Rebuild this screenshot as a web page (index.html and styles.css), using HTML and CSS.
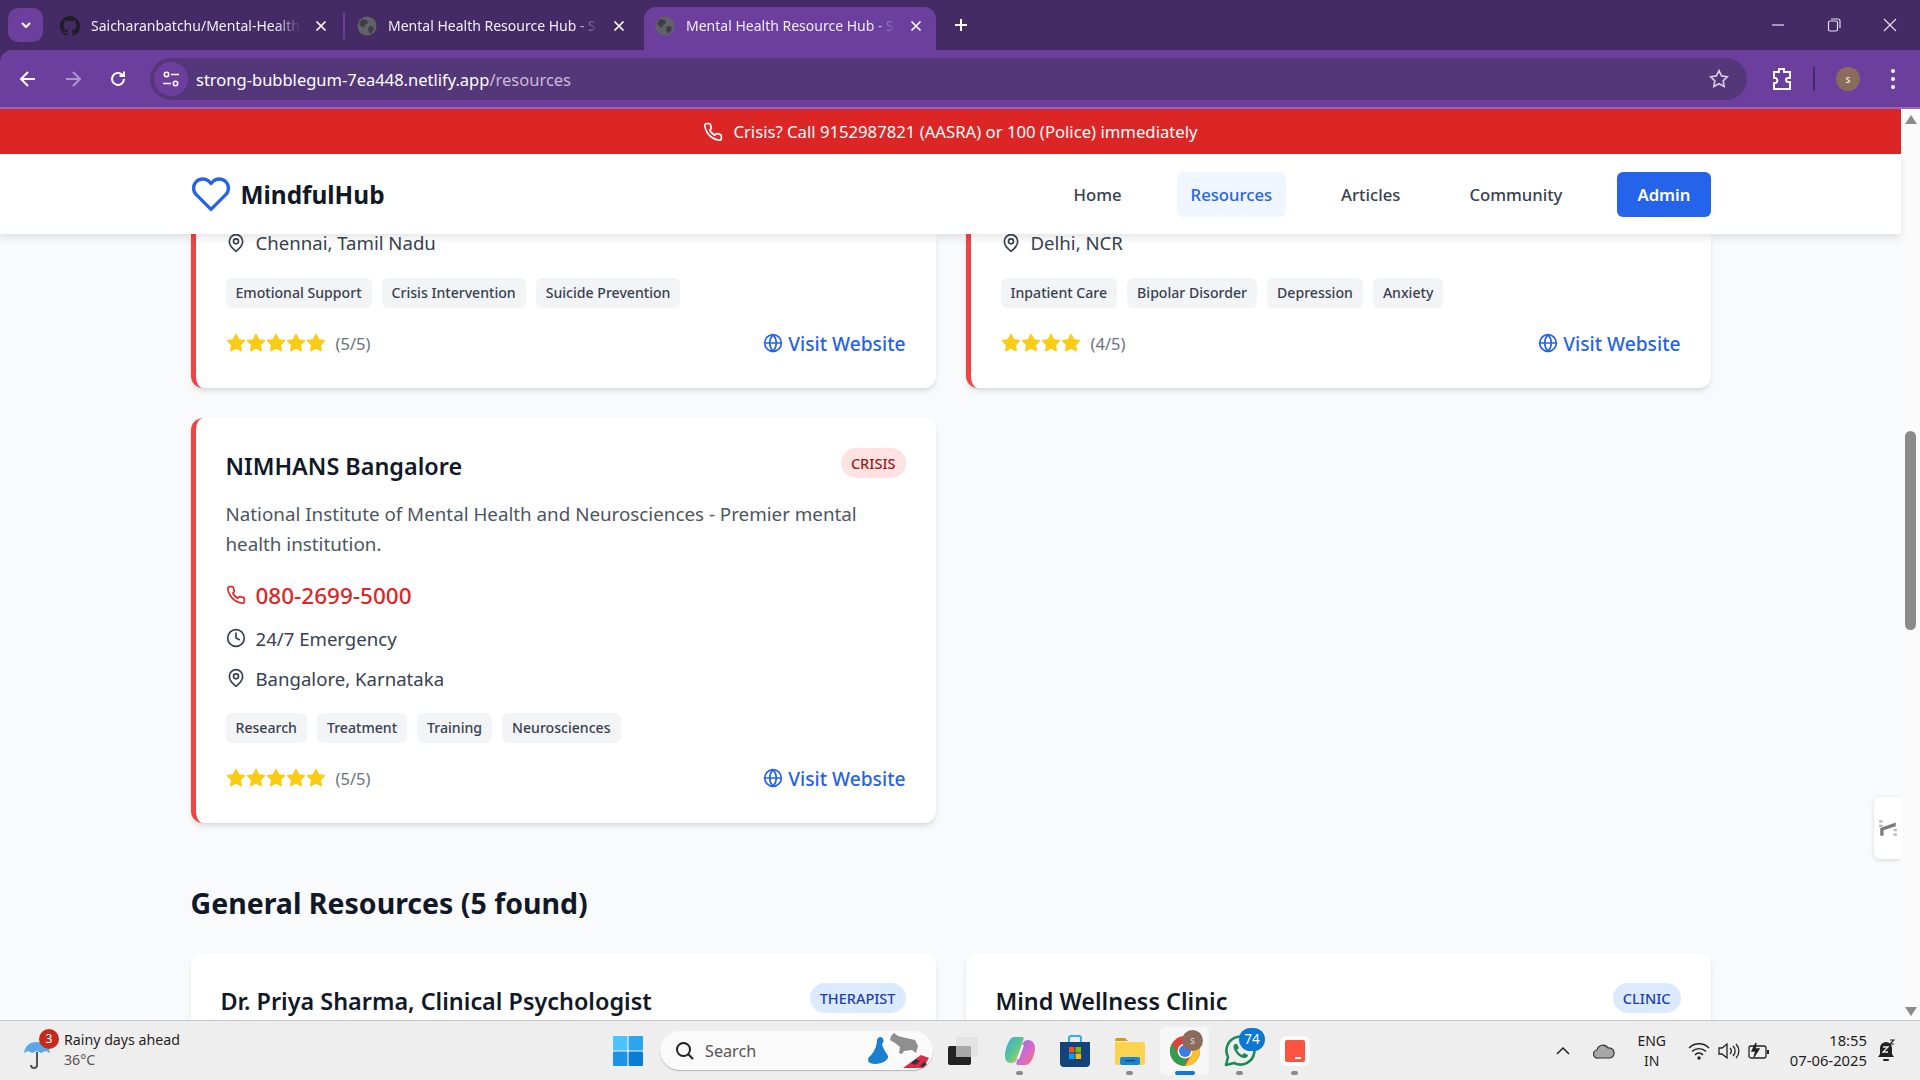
FILE: index.html
```html
<!DOCTYPE html>
<html>
<head>
  <meta charset="utf-8">
  <link rel="stylesheet" href="styles.css">
  <title>Mental Health Resource Hub</title>
</head>
<body>
  <svg class="iconDefs" width="0" height="0">
    <symbol id="iPhone" viewBox="0 0 24 24"><path d="M22 16.92v3a2 2 0 0 1-2.18 2 19.79 19.79 0 0 1-8.63-3.07 19.5 19.5 0 0 1-6-6 19.79 19.79 0 0 1-3.07-8.67A2 2 0 0 1 4.11 2h3a2 2 0 0 1 2 1.72 12.84 12.84 0 0 0 .7 2.81 2 2 0 0 1-.45 2.11L8.09 9.91a16 16 0 0 0 6 6l1.27-1.27a2 2 0 0 1 2.11-.45 12.84 12.84 0 0 0 2.81.7A2 2 0 0 1 22 16.92z"/></symbol>
    <symbol id="iPin" viewBox="0 0 24 24"><path d="M20 10c0 6-8 12-8 12s-8-6-8-12a8 8 0 0 1 16 0Z"/><circle cx="12" cy="10" r="3"/></symbol>
    <symbol id="iClock" viewBox="0 0 24 24"><circle cx="12" cy="12" r="10"/><polyline points="12 6 12 12 16 14"/></symbol>
    <symbol id="iGlobe" viewBox="0 0 24 24"><circle cx="12" cy="12" r="10"/><path d="M2 12h20"/><path d="M12 2a15.3 15.3 0 0 1 4 10 15.3 15.3 0 0 1-4 10 15.3 15.3 0 0 1-4-10 15.3 15.3 0 0 1 4-10z"/></symbol>
    <symbol id="iStar" viewBox="0 0 24 24"><polygon points="12 2 15.09 8.26 22 9.27 17 14.14 18.18 21.02 12 17.77 5.82 21.02 7 14.14 2 9.27 8.91 8.26 12 2"/></symbol>
    <symbol id="iEarth" viewBox="0 0 20 20"><circle cx="10" cy="10" r="9.5" fill="#5f6368"/><path d="M5 3l5 1 1 3-3 2-1 3-3-2-2-2zM12 10l5 1-1 4-3 3-2-4z" fill="#3d3f44"/></symbol>
    <symbol id="iClose" viewBox="0 0 12 12"><path d="M1.500 1.500l9 9M10.500 1.500l-9 9" fill="none" stroke="#fff" stroke-width="1.700"/></symbol>
  </svg>

  <header class="browser">
    <div class="tabStrip">
      <div class="tabMenu">
        <svg width="14" height="14" viewBox="0 0 14 14" class="chromeStroke"><path d="M3 5l4 4 4-4"/></svg>
      </div>
      <div class="tab tabFirst">
        <svg class="favicon" viewBox="0 0 16 16"><path fill="#1b1f23" d="M8 0C3.58 0 0 3.58 0 8c0 3.54 2.29 6.53 5.47 7.59.4.07.55-.17.55-.38v-1.34c-2.23.48-2.7-1.07-2.7-1.07-.36-.92-.89-1.17-.89-1.17-.73-.5.05-.49.05-.49.8.06 1.23.83 1.23.83.71 1.22 1.87.87 2.33.66.07-.52.28-.87.5-1.07-1.78-.2-3.64-.89-3.64-3.95 0-.87.31-1.59.82-2.15-.08-.2-.36-1.02.08-2.12 0 0 .67-.21 2.2.82a7.7 7.7 0 0 1 4 0c1.53-1.04 2.2-.82 2.2-.82.44 1.1.16 1.92.08 2.12.51.56.82 1.27.82 2.15 0 3.07-1.87 3.75-3.65 3.95.29.25.54.73.54 1.48v2.2c0 .21.15.46.55.38A8 8 0 0 0 16 8c0-4.42-3.58-8-8-8z"/></svg>
        <span class="tabTitle">Saicharanbatchu/Mental-Health</span>
        <svg class="tabClose"><use href="#iClose"/></svg>
      </div>
      <div class="tabSep"></div>
      <div class="tab tabMid">
        <svg class="favicon"><use href="#iEarth"/></svg>
        <span class="tabTitle">Mental Health Resource Hub - S</span>
        <svg class="tabClose"><use href="#iClose"/></svg>
      </div>
      <div class="tab tabActive">
        <svg class="favicon"><use href="#iEarth"/></svg>
        <span class="tabTitle">Mental Health Resource Hub - S</span>
        <svg class="tabClose"><use href="#iClose"/></svg>
      </div>
      <svg class="newTab chromeStroke" width="16" height="16" viewBox="0 0 16 16"><path d="M8 2v12M2 8h12"/></svg>
      <div class="winBtns">
        <svg width="14" height="14" viewBox="0 0 14 14" class="winStroke"><path d="M1 7h12"/></svg>
        <svg width="14" height="14" viewBox="0 0 14 14" class="winStroke"><rect x="1.500" y="3" width="9" height="10" rx="1.500"/><path d="M4 1h7a2 2 0 0 1 2 2v7"/></svg>
        <svg width="14" height="14" viewBox="0 0 14 14" class="winStroke"><path d="M1 1l12 12M13 1L1 13"/></svg>
      </div>
    </div>
    <div class="toolbar">
      <svg class="navArrow chromeStroke" width="20" height="20" viewBox="0 0 20 20"><path d="M17 10H3M10 3l-7 7 7 7"/></svg>
      <svg class="navArrow chromeStroke navOff" width="20" height="20" viewBox="0 0 20 20"><path d="M3 10h14M10 3l7 7-7 7"/></svg>
      <svg class="navArrow chromeStroke" width="20" height="20" viewBox="0 0 20 20"><path d="M16 10a6 6 0 1 1-2-4.500L16 7M16 2.500V7h-4.500"/></svg>
      <div class="urlBar">
        <div class="siteInfo">
          <svg width="20" height="20" viewBox="0 0 20 20" class="chromeStroke thin"><circle cx="5.500" cy="5.500" r="2.200"/><path d="M10 5.500h8M2 14.500h8"/><circle cx="14.500" cy="14.500" r="2.200"/></svg>
        </div>
        <span class="urlText">strong-bubblegum-7ea448.netlify.app<span class="urlPath">/resources</span></span>
        <svg class="urlStar" width="20" height="20" viewBox="0 0 24 24" fill="none" stroke="#d5cce0" stroke-width="2"><use href="#iStar"/></svg>
      </div>
      <svg class="extIcon" width="22" height="24" viewBox="0 0 22 24" fill="none" stroke="#fff" stroke-width="2"><path d="M3 5h5V2h5v3h6v6h-2a2 2 0 0 0 0 4h2v7H3v-6h2a3 3 0 0 0 0-5H3z"/></svg>
      <div class="toolSep"></div>
      <div class="avatar">s</div>
      <div class="kebab"><i></i><i></i><i></i></div>
    </div>
  </header>

  <div class="viewport">
    <div class="page">
      <div class="crisisBar">
        <svg class="ico"><use href="#iPhone"/></svg>
        <span>Crisis? Call 9152987821 (AASRA) or 100 (Police) immediately</span>
      </div>
      <nav class="siteNav">
        <div class="navInner">
          <div class="brand">
            <svg class="brandHeart" viewBox="0 0 24 24"><path d="M20.84 4.61a5.500 5.500 0 0 0-7.78 0L12 5.670l-1.060-1.060a5.500 5.500 0 0 0-7.780 7.780l1.060 1.060L12 21.230l7.780-7.780 1.060-1.060a5.500 5.500 0 0 0 0-7.780z"/></svg>
            <span>MindfulHub</span>
          </div>
          <div class="navLinks">
            <a>Home</a>
            <a class="navActive">Resources</a>
            <a>Articles</a>
            <a>Community</a>
            <a class="navAdmin">Admin</a>
          </div>
        </div>
      </nav>

      <main class="scrollArea">
        <div class="container">
          <div class="cardGrid">
            <div class="card cardCrisis cardTail">
              <div class="infoRow"><svg class="ico"><use href="#iPin"/></svg>Chennai, Tamil Nadu</div>
              <div class="tags"><span>Emotional Support</span><span>Crisis Intervention</span><span>Suicide Prevention</span></div>
              <div class="cardFoot">
                <div class="rating">
                  <svg class="star"><use href="#iStar"/></svg><svg class="star"><use href="#iStar"/></svg><svg class="star"><use href="#iStar"/></svg><svg class="star"><use href="#iStar"/></svg><svg class="star"><use href="#iStar"/></svg>
                  <span>(5/5)</span>
                </div>
                <a class="visit"><svg class="ico"><use href="#iGlobe"/></svg>Visit Website</a>
              </div>
            </div>
            <div class="card cardCrisis cardTail">
              <div class="infoRow"><svg class="ico"><use href="#iPin"/></svg>Delhi, NCR</div>
              <div class="tags"><span>Inpatient Care</span><span>Bipolar Disorder</span><span>Depression</span><span>Anxiety</span></div>
              <div class="cardFoot">
                <div class="rating">
                  <svg class="star"><use href="#iStar"/></svg><svg class="star"><use href="#iStar"/></svg><svg class="star"><use href="#iStar"/></svg><svg class="star"><use href="#iStar"/></svg>
                  <span>(4/5)</span>
                </div>
                <a class="visit"><svg class="ico"><use href="#iGlobe"/></svg>Visit Website</a>
              </div>
            </div>
            <div class="card cardCrisis">
              <div class="cardHead">
                <h3>NIMHANS Bangalore</h3>
                <span class="badge badgeCrisis">CRISIS</span>
              </div>
              <p class="desc">National Institute of Mental Health and Neurosciences - Premier mental health institution.</p>
              <div class="infoRow phoneRow"><svg class="ico"><use href="#iPhone"/></svg>080-2699-5000</div>
              <div class="infoRow"><svg class="ico"><use href="#iClock"/></svg>24/7 Emergency</div>
              <div class="infoRow"><svg class="ico"><use href="#iPin"/></svg>Bangalore, Karnataka</div>
              <div class="tags"><span>Research</span><span>Treatment</span><span>Training</span><span>Neurosciences</span></div>
              <div class="cardFoot">
                <div class="rating">
                  <svg class="star"><use href="#iStar"/></svg><svg class="star"><use href="#iStar"/></svg><svg class="star"><use href="#iStar"/></svg><svg class="star"><use href="#iStar"/></svg><svg class="star"><use href="#iStar"/></svg>
                  <span>(5/5)</span>
                </div>
                <a class="visit"><svg class="ico"><use href="#iGlobe"/></svg>Visit Website</a>
              </div>
            </div>
          </div>

          <h2 class="sectionTitle">General Resources (5 found)</h2>
          <div class="cardGrid">
            <div class="card">
              <div class="cardHead">
                <h3>Dr. Priya Sharma, Clinical Psychologist</h3>
                <span class="badge badgeBlue">THERAPIST</span>
              </div>
            </div>
            <div class="card">
              <div class="cardHead">
                <h3>Mind Wellness Clinic</h3>
                <span class="badge badgeBlue">CLINIC</span>
              </div>
            </div>
          </div>
        </div>
      </main>

      <div class="sideTab">
        <svg width="20" height="20" viewBox="0 0 18 18"><path d="M2 9l14-5v3.500L5 11v5H2z" fill="#7c7c7c"/><path d="M1 2h3v2H1zM1 6h3v2H1zM14 10h3v2h-3zM14 14h3v2h-3z" fill="#b5b5b5"/></svg>
      </div>
    </div>

    <div class="scrollBar">
      <div class="arrowUp"></div>
      <div class="thumb"></div>
      <div class="arrowDown"></div>
    </div>
  </div>

  <footer class="taskbar">
    <div class="weather">
      <div class="umbrella">
        <svg width="30" height="34" viewBox="0 0 30 34"><path d="M2 16C3 8 9 5 15 5s12 3 13 11l-4-2-5 2-4-2-5 2-4-2z" fill="#5aa9e6"/><path d="M15 15v13a3 3 0 0 1-6 0" fill="none" stroke="#555" stroke-width="2"/></svg>
        <span class="weatherBadge">3</span>
      </div>
      <div class="weatherText">
        <div>Rainy days ahead</div>
        <div class="weatherTemp">36°C</div>
      </div>
    </div>

    <div class="taskCenter">
      <div class="tile">
        <svg width="30" height="30" viewBox="0 0 30 30"><rect width="14.400" height="14.400" rx="1" fill="#4cc2ff"/><rect x="15.600" width="14.400" height="14.400" rx="1" fill="#2aa5ee"/><rect y="15.600" width="14.400" height="14.400" rx="1" fill="#1c93e3"/><rect x="15.600" y="15.600" width="14.400" height="14.400" rx="1" fill="#0b7cd6"/></svg>
      </div>
      <div class="searchBox">
        <svg width="20" height="20" viewBox="0 0 20 20" fill="none" stroke="#1f1f1f" stroke-width="2"><circle cx="8.500" cy="8.500" r="6.500"/><path d="M13.500 13.500L18 18"/></svg>
        <span>Search</span>
        <svg class="searchArt" width="62" height="40" viewBox="0 0 62 40">
          <path d="M10 10a4 4 0 0 1 4-3 4 4 0 0 1 1 7c1 5 4 8 6 12 1 4-6 8-13 8-7 0-8-4-6-7 4-3 8-10 8-17z" fill="#1a7fd1"/>
          <path d="M24 6l3-3 4 3 8 2 9 2 3 6-2 7-4-3-8 1-2 3-3-1 1-6-5-4-5-3z" fill="#8f8f8f"/>
          <path d="M36 38l18-13 8 3-6 10z" fill="#d92a48"/><path d="M44 33l5-4 4 2-5 4zM53 36l4-4 3 2-3 3z" fill="#333"/>
        </svg>
      </div>
      <div class="tile tileTask">
        <svg width="30" height="28" viewBox="0 0 30 28"><rect x="0" y="9" width="23" height="19" rx="2" fill="#222"/><rect x="8" y="0" width="22" height="20" rx="1" fill="#e3e3e3"/><rect x="8" y="9" width="15" height="11" fill="#a9a9a9"/></svg>
      </div>
      <div class="tile tileDot">
        <svg width="30" height="30" viewBox="0 0 30 30">
          <defs>
            <linearGradient id="copA" x1="0" y1="0" x2="1" y2="1"><stop offset="0" stop-color="#3ea7e8"/><stop offset=".5" stop-color="#58c78f"/><stop offset="1" stop-color="#f4c34a"/></linearGradient>
            <linearGradient id="copB" x1="0" y1="0" x2="1" y2="1"><stop offset="0" stop-color="#8a6cf0"/><stop offset=".6" stop-color="#dd6ac6"/><stop offset="1" stop-color="#f27b4c"/></linearGradient>
          </defs>
          <path d="M9 1h8c2 0 2 2 1 4l-6 18c-1 3-3 4-6 4-4 0-6-3-6-7 0-6 4-19 9-19z" fill="url(#copA)"/>
          <path d="M21 29h-8c-2 0-2-2-1-4l6-18c1-2 3-3 5-3 4 0 7 3 7 8 0 6-4 17-9 17z" fill="url(#copB)"/>
          <path d="M18 9l-5 14" stroke="#fff" stroke-width="2" fill="none"/>
        </svg>
      </div>
      <div class="tile">
        <svg width="30" height="32" viewBox="0 0 30 32"><path d="M9 8V3a2 2 0 0 1 2-2h8a2 2 0 0 1 2 2v5" fill="none" stroke="#2fb0ea" stroke-width="2"/><path d="M0 7h30v21a4 4 0 0 1-4 4H4a4 4 0 0 1-4-4z" fill="#13437a"/><rect x="9" y="12" width="5.500" height="5.500" fill="#f25022"/><rect x="15.500" y="12" width="5.500" height="5.500" fill="#7fba00"/><rect x="9" y="18.500" width="5.500" height="5.500" fill="#00a4ef"/><rect x="15.500" y="18.500" width="5.500" height="5.500" fill="#ffb900"/></svg>
      </div>
      <div class="tile tileDot">
        <svg width="30" height="28" viewBox="0 0 30 28"><path d="M0 3a2 2 0 0 1 2-2h8l3 3h-13z" fill="#d59c0b"/><path d="M0 5h28a2 2 0 0 1 2 2v19a2 2 0 0 1-2 2H2a2 2 0 0 1-2-2z" fill="#fcd34f"/><rect x="5" y="20" width="20" height="8" rx="2" fill="#1687d8"/><rect x="10" y="23" width="10" height="1.500" fill="#0c4f86"/></svg>
      </div>
      <div class="tile tileOpen">
        <svg width="32" height="32" viewBox="0 0 32 32">
          <circle cx="16" cy="16" r="15" fill="#dc4237"/>
          <path d="M16 31A15 15 0 0 1 3 8.500L10 20a7 7 0 0 0 8 3z" fill="#2f9e4f"/>
          <path d="M16 31a15 15 0 0 0 13-22.500H16a7.500 7.500 0 0 1 6 11.500z" fill="#f7c32e"/>
          <circle cx="16" cy="16" r="7.500" fill="#fff"/><circle cx="16" cy="16" r="6" fill="#3b7de8"/>
        </svg>
        <span class="chromeBadge">s</span>
      </div>
      <div class="tile tileDot">
        <svg width="32" height="32" viewBox="0 0 32 32" fill="none"><path d="M2 30l2-8A14 14 0 1 1 10 28z" stroke="#1c8a55" stroke-width="2.600" stroke-linejoin="round"/><path d="M11 9c-2 1-2 4 0 7 2 4 6 7 9 7 3 0 4-2 4-3l-4-2-2 2c-2-1-4-3-5-5l2-2-2-4z" fill="#1c8a55"/></svg>
        <span class="waBadge">74</span>
      </div>
      <div class="tile tileDot">
        <div class="redApp"><div class="redInner"><i></i></div></div>
      </div>
    </div>

    <div class="tray">
      <svg class="trayCaret" width="14" height="10" viewBox="0 0 14 10" fill="none" stroke="#222" stroke-width="1.500"><path d="M1 8l6-6 6 6"/></svg>
      <svg class="trayCloud" width="22" height="16" viewBox="0 0 22 16"><path d="M5 15a4 4 0 0 1-1-8 6 6 0 0 1 11-2 5 5 0 0 1 2 10z" fill="#a7a7a7" stroke="#333" stroke-width="1.200"/></svg>
      <div class="trayLang"><div>ENG</div><div>IN</div></div>
      <svg class="trayIcon" width="22" height="18" viewBox="0 0 22 18" fill="none" stroke="#222" stroke-width="1.400"><path d="M1 6a14 14 0 0 1 20 0M4 9.500a10 10 0 0 1 14 0M7 13a5 5 0 0 1 8 0"/><circle cx="11" cy="16" r="1" fill="#222"/></svg>
      <svg class="trayIcon" width="22" height="18" viewBox="0 0 22 18" fill="none" stroke="#222" stroke-width="1.300"><path d="M1 6h3l5-4v14l-5-4H1zM12 6a4 4 0 0 1 0 6M15 4a7 7 0 0 1 0 10M18 2a10 10 0 0 1 0 14"/></svg>
      <svg class="trayIcon" width="22" height="18" viewBox="0 0 22 18" fill="none" stroke="#222" stroke-width="1.300"><rect x="1" y="4" width="17" height="12" rx="2"/><path d="M20 8v4" stroke-width="2"/><path d="M8 1L4 9h4l-2 6 5-8H7z" fill="#222"/></svg>
      <div class="clock"><div>18:55</div><div>07-06-2025</div></div>
      <svg class="trayBell" width="18" height="24" viewBox="0 0 18 24"><path d="M9 3a6 6 0 0 1 6 6v6l2 3H1l2-3V9a6 6 0 0 1 6-6z" fill="#222"/><rect x="6" y="20" width="6" height="2" rx="1" fill="#222"/><path d="M6 8h5l-5 5h5" stroke="#eee" fill="none" stroke-width="1.300"/><path d="M13 1h4l-4 4h4" stroke="#222" fill="none" stroke-width="1.100"/></svg>
    </div>
  </footer>
</body>
</html>
```

FILE: styles.css
```css
* {
  box-sizing: border-box;
}
html, body {
  margin: 0;
  height: 100%;
}
body {
  display: flex;
  flex-direction: column;
  height: 1080px;
  overflow: hidden;
  font-family: "Noto Sans", "Open Sans", sans-serif;
  background-color: #f9fafb;
}
.iconDefs {
  display: none;
}

/* browser top */
.browser {
  flex: none;
  background-color: #452b66;
  color: #fff;
}
.chromeStroke {
  fill: none;
  stroke: #fff;
  stroke-width: 2;
}
.chromeStroke.thin {
  stroke-width: 1.6;
}
.tabStrip {
  display: flex;
  align-items: flex-end;
  height: 50px;
  padding-left: 8px;
}
.tabMenu {
  display: flex;
  align-items: center;
  justify-content: center;
  width: 35px;
  height: 34px;
  margin-bottom: 8px;
  border-radius: 10px;
  background-color: #6c3f9f;
}
.tab {
  display: flex;
  align-items: center;
  height: 43px;
  padding-bottom: 6px;
  font-size: 14px;
  border-radius: 12px 12px 0 0;
}
.tabFirst {
  width: 300px;
  padding-left: 17px;
  padding-right: 16px;
}
.tabMid {
  width: 291px;
  padding-left: 12px;
  padding-right: 11px;
}
.tabActive {
  width: 292px;
  margin-left: 8px;
  padding-left: 11px;
  padding-right: 14px;
  background-color: #6c3f9f;
}
.tabSep {
  width: 2px;
  height: 26px;
  margin-bottom: 11px;
  background-color: #6c3f9f;
}
.favicon {
  flex: none;
  width: 20px;
  height: 20px;
  margin-right: 11px;
}
.tabTitle {
  flex: 1;
  overflow: hidden;
  white-space: nowrap;
  color: #f1ecf6;
  -webkit-mask-image: linear-gradient(to right, #000 88%, transparent 100%);
  mask-image: linear-gradient(to right, #000 88%, transparent 100%);
}
.tabClose {
  flex: none;
  width: 12px;
  height: 12px;
  margin-left: 14px;
}
.newTab {
  margin: 0 0 17px 17px;
}
.winBtns {
  display: flex;
  gap: 42px;
  margin-left: auto;
  margin-bottom: 18px;
  padding-right: 23px;
}
.winStroke {
  fill: none;
  stroke: #e6dff0;
  stroke-width: 1.2;
}
.toolbar {
  display: flex;
  align-items: center;
  height: 59px;
  padding: 1px 20px 0 18px;
  background-color: #6c3f9f;
  border-bottom: 2px solid #9668bd;
  border-radius: 12px 0 0 0;
}
.navArrow {
  margin-right: 25px;
}
.navOff {
  opacity: .45;
}
.urlBar {
  display: flex;
  align-items: center;
  width: 1597px;
  height: 42px;
  margin-left: -3px;
  padding: 0 18px 0 4px;
  border-radius: 21px;
  background-color: #543778;
}
.siteInfo {
  display: flex;
  align-items: center;
  justify-content: center;
  width: 34px;
  height: 34px;
  border-radius: 50%;
  background-color: #6c3f9f;
}
.urlText {
  margin-left: 8px;
  font-size: 16.5px;
  color: #fff;
}
.urlPath {
  color: #c9bdd9;
}
.urlStar {
  margin-left: auto;
}
.extIcon {
  margin-left: 24px;
}
.toolSep {
  width: 2px;
  height: 24px;
  margin: 0 21px 0 20px;
  background-color: #452b66;
}
.avatar {
  width: 24px;
  height: 24px;
  border-radius: 50%;
  background-color: #8b6b5c;
  font-size: 10px;
  line-height: 24px;
  text-align: center;
}
.kebab {
  display: flex;
  flex-direction: column;
  gap: 4px;
  margin-left: 31px;
}
.kebab i {
  width: 4px;
  height: 4px;
  border-radius: 50%;
  background-color: #fff;
}

/* page */
.viewport {
  flex: 1;
  display: flex;
  min-height: 0;
  overflow: hidden;
}
.page {
  flex: 1;
  display: flex;
  flex-direction: column;
  position: relative;
  min-width: 0;
}
.crisisBar {
  flex: none;
  display: flex;
  align-items: center;
  justify-content: center;
  gap: 10px;
  height: 45px;
  background-color: #dc2626;
  color: #fff;
  font-size: 16.7px;
}
.ico {
  flex: none;
  width: 20px;
  height: 20px;
  fill: none;
  stroke: currentColor;
  stroke-width: 2;
  stroke-linecap: round;
  stroke-linejoin: round;
}
.siteNav {
  flex: none;
  position: relative;
  z-index: 2;
  height: 80px;
  background-color: #fff;
  box-shadow: 0 4px 8px rgba(0,0,0,.1);
}
.navInner {
  display: flex;
  align-items: center;
  justify-content: space-between;
  width: 1520px;
  height: 100%;
  margin: 0 auto;
}
.brand {
  display: flex;
  align-items: center;
  gap: 10px;
  font-size: 24.4px;
  font-weight: 700;
  line-height: 42px;
  color: #111827;
}
.brand span {
  padding-top: 2px;
}
.brandHeart {
  width: 40px;
  height: 40px;
  fill: none;
  stroke: #2563eb;
  stroke-width: 2;
  stroke-linejoin: round;
}
.navLinks {
  display: flex;
  gap: 41px;
  height: 45px;
}
.navLinks a {
  display: flex;
  align-items: center;
  padding: 0 14px;
  border-radius: 6px;
  font-size: 16.7px;
  font-weight: 500;
  color: #374151;
}
.navLinks .navActive {
  background-color: #eff6ff;
  color: #2563eb;
}
.navLinks .navAdmin {
  padding: 0 20px;
  background-color: #2563eb;
  color: #fff;
  font-weight: 600;
}
.scrollArea {
  flex: 1;
  min-height: 0;
}
.container {
  width: 1520px;
  margin: 0 auto;
}
.cardGrid {
  display: grid;
  grid-template-columns: 745px 745px;
  gap: 30px;
}
.card {
  padding: 30px;
  border-radius: 12px;
  background-color: #fff;
  box-shadow: 0 4px 6px -1px rgba(0,0,0,.1), 0 2px 4px -2px rgba(0,0,0,.1);
}
.cardCrisis {
  border-left: 5px solid #ef4444;
}
/* first row is scrolled under the nav, only the bottom of it shows */
.cardTail {
  padding-top: 0;
  border-radius: 0 0 12px 12px;
}
.cardTail .infoRow {
  height: 18px;
  line-height: 18px;
  margin-bottom: 0;
}
.cardTail .tags {
  margin-top: 26px;
}
.cardHead {
  display: flex;
  align-items: flex-start;
  justify-content: space-between;
}
.cardHead h3 {
  margin: 0;
  font-size: 23.4px;
  font-weight: 600;
  line-height: 37.5px;
  color: #111827;
}
.badge {
  padding: 0 10px;
  border-radius: 15px;
  font-size: 14.5px;
  font-weight: 500;
  line-height: 30px;
}
.badgeCrisis {
  background-color: #fee2e2;
  color: #991b1b;
}
.badgeBlue {
  background-color: #dbeafe;
  color: #1e40af;
}
.desc {
  margin: 13.5px 0 18px;
  font-size: 18.8px;
  line-height: 30px;
  color: #4b5563;
}
.infoRow {
  display: flex;
  align-items: center;
  gap: 10px;
  height: 30px;
  margin-bottom: 10px;
  font-size: 18.6px;
  color: #374151;
}
.phoneRow {
  height: 36px;
  font-size: 22.5px;
  font-weight: 500;
  color: #dc2626;
}
.tags {
  display: flex;
  gap: 10px;
  height: 30px;
  margin-top: 20px;
}
.tags span {
  padding: 0 10px;
  border-radius: 6px;
  background-color: #f3f4f6;
  font-size: 14.1px;
  font-weight: 500;
  line-height: 30px;
  color: #374151;
}
.cardFoot {
  display: flex;
  align-items: center;
  justify-content: space-between;
  height: 30px;
  margin-top: 20px;
}
.rating {
  display: flex;
  align-items: center;
}
.star {
  width: 20px;
  height: 20px;
  fill: #facc15;
  stroke: #facc15;
  stroke-width: 2;
  stroke-linejoin: round;
}
.rating span {
  margin-left: 10px;
  font-size: 16.5px;
  color: #6b7280;
}
.visit {
  display: flex;
  align-items: center;
  gap: 5px;
  font-size: 19.2px;
  font-weight: 500;
  color: #2563eb;
}
.sectionTitle {
  margin: 58px 0 27px;
  font-size: 28.5px;
  font-weight: 700;
  line-height: 45px;
  color: #111827;
}
.sideTab {
  position: absolute;
  right: 0;
  top: 688px;
  display: flex;
  align-items: center;
  justify-content: center;
  width: 27px;
  height: 62px;
  border-radius: 6px 0 0 6px;
  background-color: #fff;
  box-shadow: 0 1px 4px rgba(0,0,0,.15);
}
.scrollBar {
  flex: none;
  position: relative;
  width: 19px;
  background-color: #fbfbfb;
}
.arrowUp, .arrowDown {
  position: absolute;
  left: 4px;
  width: 0;
  height: 0;
  border-left: 6px solid transparent;
  border-right: 6px solid transparent;
}
.arrowUp {
  top: 6px;
  border-bottom: 9px solid #8b8b8b;
}
.arrowDown {
  bottom: 4px;
  border-top: 9px solid #8b8b8b;
}
.thumb {
  position: absolute;
  left: 4px;
  top: 322px;
  width: 11px;
  height: 199px;
  border-radius: 6px;
  background-color: #8b8b8b;
}

/* windows taskbar */
.taskbar {
  flex: none;
  display: flex;
  align-items: center;
  height: 60px;
  border-top: 1px solid #c6c6c6;
  background-color: #eeeeee;
  color: #1f1f1f;
}
.weather {
  display: flex;
  align-items: center;
  width: 600px;
  padding-left: 22px;
}
.umbrella {
  position: relative;
  width: 42px;
  height: 40px;
  padding-top: 6px;
}
.weatherBadge {
  position: absolute;
  left: 17px;
  top: -2px;
  width: 20px;
  height: 20px;
  border-radius: 50%;
  background-color: #c42b1c;
  color: #fff;
  font-size: 12px;
  line-height: 20px;
  text-align: center;
}
.weatherText {
  margin-top: -2px;
  font-size: 14.2px;
  line-height: 20px;
}
.weatherTemp {
  color: #555;
}
.taskCenter {
  display: flex;
  align-items: center;
}
.tile {
  position: relative;
  display: flex;
  align-items: center;
  justify-content: center;
  width: 55px;
  height: 59px;
}
.tileTask svg {
  margin-left: -4px;
}
.tileDot::after {
  content: "";
  position: absolute;
  left: 24px;
  bottom: 5px;
  width: 7px;
  height: 4px;
  border-radius: 2px;
  background-color: #8a8a8a;
}
.tileOpen::before {
  content: "";
  position: absolute;
  left: 3px;
  top: 6px;
  width: 49px;
  height: 48px;
  border-radius: 5px;
  background-color: #f7f7f7;
}
.tileOpen::after {
  content: "";
  position: absolute;
  left: 18px;
  bottom: 5px;
  width: 20px;
  height: 4px;
  border-radius: 2px;
  background-color: #0a78d4;
}
.tileOpen svg {
  position: relative;
}
.chromeBadge {
  position: absolute;
  left: 25px;
  top: 9px;
  width: 21px;
  height: 21px;
  border-radius: 50%;
  background-color: #8b6b5c;
  color: #ddd;
  font-size: 10px;
  line-height: 21px;
  text-align: center;
}
.waBadge {
  position: absolute;
  left: 27px;
  top: 7px;
  width: 26px;
  height: 23px;
  border-radius: 12px;
  background-color: #0a78d4;
  color: #fff;
  font-size: 13.5px;
  line-height: 23px;
  text-align: center;
}
.redApp {
  display: flex;
  align-items: center;
  justify-content: center;
  width: 30px;
  height: 30px;
  border-radius: 7px;
  background-color: #fbfbfb;
}
.redInner {
  position: relative;
  width: 20px;
  height: 22px;
  border-radius: 2px;
  background-color: #fb5340;
}
.redInner i {
  position: absolute;
  right: 4px;
  bottom: 3px;
  width: 6px;
  height: 2px;
  background-color: #fff;
}
.searchBox {
  position: relative;
  display: flex;
  align-items: center;
  width: 273px;
  height: 39px;
  margin: 0 4px 0 5px;
  padding-left: 15px;
  border-radius: 20px;
  background-color: #fafafa;
  box-shadow: 0 1px 1px rgba(0,0,0,.25);
  font-size: 16.2px;
  color: #555;
}
.searchBox span {
  margin-left: 10px;
}
.searchArt {
  position: absolute;
  right: 4px;
  top: -1px;
}
.tray {
  display: flex;
  align-items: center;
  margin-left: auto;
  padding-right: 25px;
}
.trayCaret {
  margin-right: 23px;
}
.trayCloud {
  margin-right: 17px;
}
.trayLang {
  width: 40px;
  margin-right: 16px;
  font-size: 14px;
  line-height: 20px;
  text-align: center;
}
.trayIcon {
  margin-right: 8px;
}
.clock {
  margin-left: 12px;
  margin-top: -2px;
  font-size: 14.8px;
  line-height: 20px;
  text-align: right;
}
.trayBell {
  margin-left: 10px;
}
```
